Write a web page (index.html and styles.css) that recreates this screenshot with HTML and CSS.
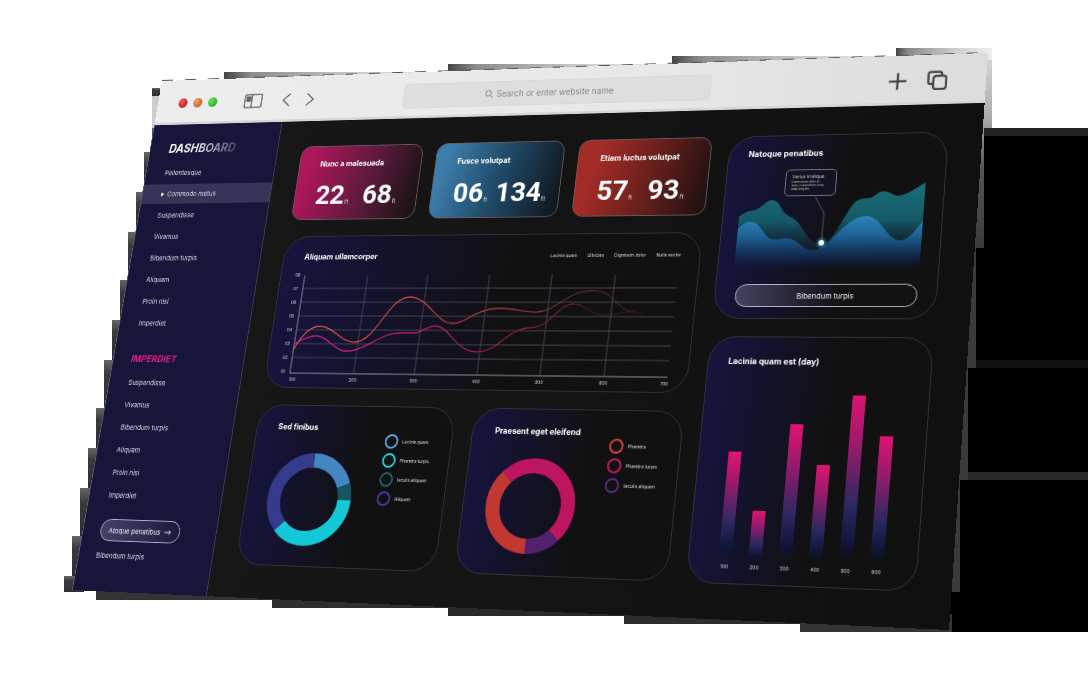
FILE: index.html
```html
<!DOCTYPE html>
<html lang="en">
<head>
<meta charset="utf-8">
<title>Dashboard</title>
<link rel="stylesheet" href="styles.css">
</head>
<body>
<div class="scene">
  <svg class="backdrop" viewBox="0 0 1090 700" aria-hidden="true">
    <defs>
      <linearGradient id="step" x1="0" x2="1"><stop offset="0" stop-color="#444"/><stop offset=".12" stop-color="#8a8a8a"/><stop offset=".6" stop-color="#ccc"/><stop offset="1" stop-color="#eee"/></linearGradient>
      <linearGradient id="side" x1="0" y1="0" x2="0" y2="1"><stop offset="0" stop-color="#666"/><stop offset=".3" stop-color="#3a3a3a"/><stop offset="1" stop-color="#2e2e2e"/></linearGradient>
      <linearGradient id="rim" x1="0" y1="0" x2="0" y2="1"><stop offset="0" stop-color="#ddd"/><stop offset=".35" stop-color="#aaa"/><stop offset=".6" stop-color="#555"/><stop offset="1" stop-color="#3a3a3a"/></linearGradient>
    </defs>
    <path fill="#000" d="M940 128H1088V632H940z"/>
    <path fill="#222" d="M980 128H1088V136H980z"/>
    <path fill="#111" d="M965 360H1088V368H965z"/>
    <path fill="#282828" d="M960 472H1088V480H960z"/>
    <path fill="#3a3a3a" d="M952 592h8V480h8V368h8V248h8V128h-30z"/>
    <path fill="url(#rim)" d="M980 48h12v80h-8v120h-10z"/>
    <g fill="url(#step)">
      <path d="M224 72H448V84H224z"/><path d="M448 64H672V76H448z"/><path d="M672 56H896V68H672z"/><path d="M896 48H992V60H896z"/>
    </g>
    <path fill="#ccc" d="M152 96h12v32h-12z"/>
    <g fill="url(#side)">
      <path d="M152 88h8v8h-8z"/><path d="M152 128h12v24h-12z"/><path d="M144 152h20v40h-20z"/><path d="M136 192h20v40h-20z"/><path d="M128 232h20v48h-20z"/><path d="M120 280h20v40h-20z"/><path d="M112 320h20v40h-20z"/><path d="M104 360h20v48h-20z"/><path d="M96 408h20v40H96z"/><path d="M88 448h20v40H88z"/><path d="M80 488h20v48H80z"/><path d="M72 536h20v40H72z"/><path d="M64 576h20v16H64z"/>
    </g>
    <path fill="#333" d="M96 580H272V600H96z"/><path fill="#2e2e2e" d="M272 590H448V608H272z"/><path fill="#292929" d="M448 598H624V616H448z"/><path fill="#2c2c2c" d="M624 606H800V624H624z"/><path fill="#333" d="M800 614H952V632H800z"/>
    <path d="M162 80.500 988 52.500" stroke="#555" stroke-dasharray="11 12" fill="none"/>
  </svg>

  <div class="window">
    <header class="chrome">
      <div class="lights"><span class="light red"></span><span class="light amber"></span><span class="light green"></span></div>
      <button class="icon-button" aria-label="Toggle sidebar"><svg width="24" height="18" viewBox="0 0 24 18"><rect x="1" y="1" width="22" height="16" rx="2"/><path d="M10 1V17"/><path d="M3.500 4H8V9H3.500z" fill="#666"/></svg></button>
      <div class="history">
        <button class="icon-button" aria-label="Back"><svg width="11" height="18" viewBox="0 0 11 18"><path d="M10 1.500 1.500 9 10 16.500"/></svg></button>
        <button class="icon-button" aria-label="Forward"><svg width="11" height="18" viewBox="0 0 11 18"><path d="M1 1.500 9.500 9 1 16.500"/></svg></button>
      </div>
      <label class="search">
        <svg width="10" height="10" viewBox="0 0 10 10"><circle cx="4.300" cy="4.300" r="3.300"/><path d="M6.700 6.700 9.500 9.500"/></svg>
        <input type="text" aria-label="Address" placeholder="Search or enter website name">
      </label>
      <div class="actions">
        <button class="icon-button bold" aria-label="New tab"><svg width="22" height="22" viewBox="0 0 22 22"><path d="M11 1.500V20.500M1.500 11H20.500"/></svg></button>
        <button class="icon-button bold" aria-label="Show tabs"><svg width="22" height="22" viewBox="0 0 22 22"><rect x="7" y="6" width="14" height="15" rx="3"/><path d="M7 15H4Q1.500 15 1.500 12.500V4Q1.500 1.500 4 1.500H13Q16 1.500 16 4V6"/></svg></button>
      </div>
    </header>

    <div class="app">
      <nav class="sidebar">
        <h1 class="brand"><span>DASHBOARD</span></h1>
        <ul class="menu">
          <li><a href="#">Pellentesque</a></li>
          <li><a href="#" class="current"><svg width="4" height="5" viewBox="0 0 4 5"><path d="M0 0 4 2.500 0 5z"/></svg>Commodo metus</a></li>
          <li><a href="#">Suspendisse</a></li>
          <li><a href="#">Vivamus</a></li>
          <li><a href="#">Bibendum turpis</a></li>
          <li><a href="#">Aliquam</a></li>
          <li><a href="#">Proin nisi</a></li>
          <li><a href="#">Imperdiet</a></li>
        </ul>
        <h2 class="section">IMPERDIET</h2>
        <ul class="menu">
          <li><a href="#">Suspendisse</a></li>
          <li><a href="#">Vivamus</a></li>
          <li><a href="#">Bibendum turpis</a></li>
          <li><a href="#">Aliquam</a></li>
          <li><a href="#">Proin nisi</a></li>
          <li><a href="#">Imperdiet</a></li>
        </ul>
        <button class="pill side-pill">Atoque penatibus <svg width="9" height="6" viewBox="0 0 9 6"><path d="M0 3H8M5.500.5 8 3 5.500 5.500" fill="none" stroke="#fff" stroke-width=".9"/></svg></button>
        <a class="foot-link" href="#">Bibendum turpis</a>
      </nav>

      <main class="board">
        <div class="column">
          <div class="stats">
            <section class="stat pink"><h3>Nunc a malesuada</h3><p class="figures"><span>22<small>ft</small></span><span>68<small>ft</small></span></p></section>
            <section class="stat blue"><h3>Fusce volutpat</h3><p class="figures tight"><span>06<small>ft</small></span><span>134<small>ft</small></span></p></section>
            <section class="stat red-card"><h3>Etiam luctus volutpat</h3><p class="figures"><span>57<small>ft</small></span><span>93<small>ft</small></span></p></section>
          </div>

          <section class="panel lines">
            <div class="panel-head"><h3>Aliquam ullamcorper</h3>
              <ul class="tags"><li>Lacinia quam</li><li>Ultricies</li><li>Dignissim dolor</li><li>Nulla auctor</li></ul></div>
            <svg class="line-chart" viewBox="216 232 470 134">
              <defs>
                <linearGradient id="orange" gradientUnits="userSpaceOnUse" x1="231" y1="0" x2="645" y2="0"><stop offset="0" stop-color="#ee5a45"/><stop offset=".6" stop-color="#a93740"/><stop offset="1" stop-color="#a93740" stop-opacity=".15"/></linearGradient>
                <linearGradient id="magenta" gradientUnits="userSpaceOnUse" x1="231" y1="0" x2="645" y2="0"><stop offset="0" stop-color="#ea1c8c"/><stop offset=".6" stop-color="#a01c55"/><stop offset="1" stop-color="#8a2545" stop-opacity=".15"/></linearGradient>
              </defs>
              <path class="grid" d="M231 255H679M231 271H679M231 287H679M231 303H679M231 319H679M231 335H679M310 240V353M384 240V353M459 240V353M533 240V353M607 240V353"/>
              <path class="axis" d="M231 240V353H679"/>
              <path fill="none" stroke="url(#orange)" stroke-width="1.300" d="M231 326C237 312 247 299 259 299C276 298 289 318 306 317C332 316 340 265 366 265C388 265 403 295 421 295C437 296 447 278 476 278C495 278 508 283 521 282C543 281 553 258 583 258C613 259 610 284 643 283"/>
              <path fill="none" stroke="url(#magenta)" stroke-width="1.300" d="M231 319C239 316 247 310 256 310C268 309 283 326 293 327C318 330 334 306 361 306H378C387 305 393 298 401 298C418 297 429 327 455 327C480 327 487 303 510 300C523 300 527 297 533 293C544 285 549 273 562 273C577 273 582 285 597 285C612 285 620 283 635 280"/>
              <g class="tick" text-anchor="middle">
                <text x="222" y="241">08</text><text x="222" y="257">07</text><text x="222" y="273">06</text><text x="222" y="289">05</text><text x="222" y="305">04</text><text x="222" y="321">03</text><text x="222" y="337">02</text><text x="222" y="353">01</text>
                <text x="235" y="362">100</text><text x="310" y="362">200</text><text x="384" y="362">300</text><text x="459" y="362">400</text><text x="533" y="362">500</text><text x="607" y="362">600</text><text x="676" y="362">700</text>
              </g>
            </svg>
          </section>

          <div class="pair">
            <section class="panel share">
              <h3>Sed finibus</h3>
              <div class="share-body">
                <svg class="donut" viewBox="0 0 102 102">
                  <g fill="none" stroke-width="16" transform="rotate(-90 51 51)">
                    <circle cx="51" cy="51" r="43" pathLength="360" stroke="#4387c2" stroke-dasharray="68 292"/>
                    <circle cx="51" cy="51" r="43" pathLength="360" stroke="#175463" stroke-dasharray="22 338" stroke-dashoffset="-68"/>
                    <circle cx="51" cy="51" r="43" pathLength="360" stroke="#14c8d8" stroke-dasharray="136 224" stroke-dashoffset="-90"/>
                    <circle cx="51" cy="51" r="43" pathLength="360" stroke="#343a8c" stroke-dasharray="134 226" stroke-dashoffset="-226"/>
                  </g>
                </svg>
                <ul class="legend"><li class="sky">Lacinia quam</li><li class="aqua">Pharetra turpis</li><li class="teal">Iaculis aliquam</li><li class="indigo">Aliquam</li></ul>
              </div>
            </section>
            <section class="panel share">
              <h3>Praesent eget eleifend</h3>
              <div class="share-body">
                <svg class="donut" viewBox="0 0 102 102">
                  <g fill="none" stroke-width="16" transform="rotate(-90 51 51)">
                    <circle cx="51" cy="51" r="43" pathLength="360" stroke="#be1560" stroke-dasharray="180 180" stroke-dashoffset="45"/>
                    <circle cx="51" cy="51" r="43" pathLength="360" stroke="#52206e" stroke-dasharray="45 315" stroke-dashoffset="-135"/>
                    <circle cx="51" cy="51" r="43" pathLength="360" stroke="#c23934" stroke-dasharray="135 225" stroke-dashoffset="-180"/>
                  </g>
                </svg>
                <ul class="legend"><li class="orange">Pharetra</li><li class="rose">Pharetra turpis</li><li class="violet">Iaculis aliquam</li></ul>
              </div>
            </section>
          </div>
        </div>

        <div class="column">
          <section class="panel waves">
            <h3>Natoque penatibus</h3>
            <div class="wave-plot">
              <svg class="wave-chart" viewBox="741 120 202 125">
                <defs>
                  <linearGradient id="wt" gradientUnits="userSpaceOnUse" x1="0" y1="142" x2="0" y2="232"><stop offset="0" stop-color="#177078"/><stop offset=".45" stop-color="#155866"/><stop offset="1" stop-color="#101830" stop-opacity="0"/></linearGradient>
                  <linearGradient id="wb" gradientUnits="userSpaceOnUse" x1="0" y1="177" x2="0" y2="238"><stop offset="0" stop-color="#2c85bb"/><stop offset=".35" stop-color="#1e6496"/><stop offset=".75" stop-color="#122a52" stop-opacity=".8"/><stop offset="1" stop-color="#121538" stop-opacity="0"/></linearGradient>
                  <radialGradient id="glow"><stop offset="0" stop-color="#35d6ec"/><stop offset="1" stop-color="#1496b4" stop-opacity="0"/></radialGradient>
                </defs>
                <path fill="url(#wt)" d="M741 177C748 171 753 171 758 170C765 168 769 159 777 159C785 160 786 168 791 173C796 178 802 178 808 185C816 194 822 209 835 208C846 206 852 190 857 181C863 171 866 162 872 160C877 158 880 159 884 158C889 157 892 151 898 151C906 151 909 157 916 156C925 155 934 147 943 142V240H741z"/>
                <path fill="url(#wb)" d="M741 191C745 186 749 183 754 183C766 182 771 202 782 203C788 203 793 201 798 202C809 203 816 215 825 215C837 216 846 202 854 194C863 185 871 178 882 178C898 178 906 205 920 205C930 205 936 193 943 184V242H741z"/>
                <path d="M824 156 835 174V207" fill="none" stroke="#778" stroke-width=".7"/>
                <circle cx="835" cy="207" r="7" fill="url(#glow)"/><circle cx="835" cy="207" r="3" fill="#fff"/>
              </svg>
              <div class="tooltip"><strong>Varius tristique</strong><p>Lorem ipsum dolor sit<br>amet, consectetuer, niuq<br>adipiscing elit.</p></div>
            </div>
            <button class="pill wide-pill">Bibendum turpis</button>
          </section>

          <section class="panel bars">
            <h3>Lacinia quam est (day)</h3>
            <div class="bar-chart">
              <div class="bar-item"><span class="bar" style="height:113px"></span>100</div>
              <div class="bar-item"><span class="bar" style="height:52px"></span>200</div>
              <div class="bar-item"><span class="bar" style="height:143px"></span>300</div>
              <div class="bar-item"><span class="bar" style="height:101px"></span>400</div>
              <div class="bar-item"><span class="bar" style="height:174px"></span>500</div>
              <div class="bar-item"><span class="bar" style="height:132px"></span>600</div>
            </div>
          </section>
        </div>
      </main>
    </div>
  </div>
</div>
</body>
</html>
```
FILE: styles.css
```css
* { box-sizing: border-box; margin: 0; padding: 0; }
body { background: #fff; font-family: Inter, "Open Sans", sans-serif; color: #fff; }
ul { list-style: none; }
a { color: inherit; text-decoration: none; }
button { border: 0; background: none; color: inherit; font: inherit; }
svg { display: block; }

.scene { position: relative; min-height: 100vh; overflow: hidden; }
.backdrop { position: absolute; top: 0; left: 0; width: 1090px; }

/* the browser window, seen at an angle */
.window {
  position: relative;
  max-width: 1000px;
  min-height: 606px;
  display: flex;
  flex-direction: column;
  transform-origin: 0 0;
  transform: matrix3d(0.713892, -0.034014, 0, -0.00011347, -0.156023, 0.778404, 0, -0.00010429, 0, 0, 1, 0, 162, 81, 0, 1);
}

.chrome {
  display: grid;
  grid-template-columns: 88px 26px 24px 42px 114px 372px 1fr;
  align-items: center;
  height: 56px;
  padding: 4px 42px 0 28px;
  background: linear-gradient(90deg, #ededed, #e8e8e8 60%, #dcdcdc);
  border-bottom: 3px solid #d6d6d6;
  border-radius: 4px 4px 0 0;
}
.lights { display: flex; gap: 8px; }
.light { width: 12px; height: 12px; border-radius: 50%; }
.red { background: radial-gradient(circle at 35% 35%, #f0605c, #d0222c 60%); }
.amber { background: radial-gradient(circle at 35% 35%, #f0a060, #d06a2a 60%); }
.green { background: radial-gradient(circle at 35% 35%, #6ae05c, #2cb82c 60%); }
.icon-button svg { fill: none; stroke: #5c5c5c; stroke-width: 1.5; }
.bold svg { stroke: #444; stroke-width: 2.4; }
.history { grid-column: 4; display: flex; gap: 20px; }
.search {
  grid-column: 6;
  display: flex;
  align-items: center;
  justify-content: center;
  gap: 5px;
  height: 30px;
  border-radius: 5px;
  background: #dedede;
  border: 1px solid #d8d8d8;
}
.search svg { fill: none; stroke: #777; stroke-width: 1; }
.search input { width: 154px; border: 0; background: none; font: 10px Inter, sans-serif; color: #777; }
.search input::placeholder { color: #888; opacity: 1; }
.actions { display: flex; justify-content: flex-end; gap: 21px; }

.app { flex: 1; display: grid; grid-template-columns: 171px 1fr; background: linear-gradient(90deg, #181818, #101010); }

.sidebar { padding-top: 20px; background: #18153b; border-right: 1px solid #444254; border-left: 1px solid #5c5a78; font-size: 8px; }
.brand { padding-left: 25px; font-size: 14px; font-weight: 700; font-style: italic; line-height: 20px; }
.brand span { background: linear-gradient(90deg, #fff 35%, #4a4768); background-clip: text; -webkit-background-clip: text; color: transparent; }
.menu { padding-top: 7px; }
.menu li { height: 26px; padding: 1px 0; }
.menu a { display: flex; align-items: center; gap: 4px; height: 24px; padding-left: 25px; color: #dcdbe6; }
.menu .current { background: #37345a; }
.menu svg { fill: #fff; }
.section { margin-top: 19px; padding-left: 23px; font-size: 11px; font-style: italic; line-height: 20px; color: #e01c82; }
.section + .menu { padding-top: 5px; }
.pill { border: 1px solid #b5b3c8; border-radius: 14px; font-size: 8px; color: #eee; }
.side-pill { display: flex; align-items: center; justify-content: center; gap: 5px; width: 102px; height: 25px; margin: 14px 0 3px 22px; background: linear-gradient(90deg, #45426a, #1c193f); }
.foot-link { display: block; padding-left: 22px; line-height: 26px; color: #dcdbe6; }

.board { display: grid; grid-template-columns: 502fr 242fr; gap: 20px; padding: 31px 36px 36px 29px; }
.column { display: flex; flex-direction: column; gap: 19px; min-width: 0; }
h3 { font-size: 9px; font-weight: 700; line-height: 12px; }

.stats { display: grid; grid-template-columns: repeat(3, 1fr); gap: 17px; padding-left: 2px; }
.stat { height: 89px; padding: 15px 0 0 26px; border: 1px solid #6a5a60; border-radius: 13px; }
.pink { background: linear-gradient(105deg, #ae175b 10%, #581a3a 60%, #1c1416 95%); }
.blue { background: linear-gradient(105deg, #3c7dab 10%, #214b69 50%, #101a22 95%); }
.red-card { background: linear-gradient(105deg, #a42c28 15%, #70211e 50%, #241212 95%); }
.figures { display: flex; gap: 17px; padding-top: 11px; font: 700 32px/40px Roboto, sans-serif; }
.tight { gap: 9px; }
.figures small { padding-left: 1px; font-size: 7px; font-weight: 400; color: #ddd; }

.panel { border: 1px solid #343436; border-radius: 30px; background: linear-gradient(94deg, #17143f, #131228 30%, #111112 55%); }
.lines { height: 177px; padding: 18px 15px 0 15px; }
.panel-head { display: flex; align-items: center; justify-content: space-between; padding: 0 6px 0 11px; }
.tags { display: flex; gap: 12px; font-size: 5px; color: #ddd; }
.line-chart { width: 100%; margin-top: 8px; overflow: visible; }
.grid { fill: none; stroke: #55566a; stroke-width: .8; }
.axis { fill: none; stroke: #a5a5b5; stroke-width: .9; }
.tick { fill: #ddd; font-size: 5px; }

.pair { display: grid; grid-template-columns: 1fr 1fr; gap: 22px; }
.share { height: 179px; padding: 18px 0 0 26px; }
.share-body { display: flex; gap: 31px; }
.donut { width: 102px; margin-top: 23px; }
.legend { display: grid; gap: 8px; align-content: start; padding-top: 1px; font-size: 5px; color: #ddd; }
.legend li { display: flex; align-items: center; gap: 5px; height: 13px; }
.legend li::before { content: ""; width: 12px; height: 12px; border: 2px solid currentColor; border-radius: 50%; }
.sky::before { color: #5fa8e0; }
.aqua::before { color: #22d8d8; }
.teal::before { color: #1c6470; }
.indigo::before { color: #4a3c98; }
.orange::before { color: #d8453c; }
.rose::before { color: #c41c66; }
.violet::before { color: #5c2880; }

.waves { height: 204px; padding: 14px 20px 0 18px; }
.waves h3, .bars h3 { padding-left: 4px; }
.wave-plot { position: relative; margin-top: 7px; }
.wave-chart { width: 100%; }
.tooltip { position: absolute; top: 5px; left: 24%; width: 57px; height: 30px; padding: 4px 6px; border: 1px solid #77778a; border-radius: 5px; background: #131322; font-size: 3px; line-height: 4px; white-space: nowrap; color: #ccc; }
.tooltip strong { display: block; font-size: 5px; font-weight: 400; line-height: 6px; margin-bottom: 1px; }
.wide-pill { display: block; width: calc(100% - 4px); height: 25px; margin: 7px 0 0 4px; background: linear-gradient(90deg, #44425f, #1c1b28 45%, #121213 60%); }

.bars { flex: 1; padding: 20px 20px 0 18px; }
.bar-chart { display: flex; align-items: flex-end; gap: 18px; height: 188px; margin-top: 24px; padding-left: 14px; }
.bar-item { width: 14px; font-size: 5px; line-height: 6px; text-align: center; color: #ddd; }
.bar { display: block; margin-bottom: 3px; background: linear-gradient(#de1470, #9c1a6c 28%, #2c2860 66%, #101438 88%, transparent 96%); }
```
